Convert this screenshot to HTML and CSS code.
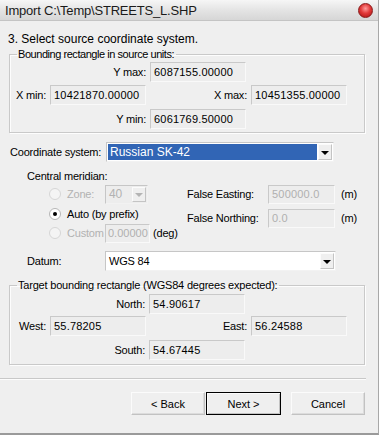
FILE: index.html
```html
<!DOCTYPE html>
<html>
<head>
<meta charset="utf-8">
<link rel="stylesheet" href="styles.css">
</head>
<body>
<div class="window">
  <div class="titlebar">
    <span class="title">Import C:\Temp\STREETS_L.SHP</span>
    <span class="close"></span>
  </div>
  <div class="content">
    <div class="step">3. Select source coordinate system.</div>

    <fieldset class="group g1">
      <legend>Bounding rectangle in source units:</legend>
      <div class="row r1">
        <span class="lbl wide">Y max:</span><span class="field">6087155.00000</span>
      </div>
      <div class="row r2">
        <span class="lbl narrow">X min:</span><span class="field">10421870.00000</span>
        <span class="lbl mid">X max:</span><span class="field">10451355.00000</span>
      </div>
      <div class="row r3">
        <span class="lbl wide">Y min:</span><span class="field">6061769.50000</span>
      </div>
    </fieldset>

    <div class="csrow">
      <span class="cslabel">Coordinate system:</span>
      <div class="combo cscombo">
        <span class="sel">Russian SK-42</span>
        <span class="arrowbtn"><span class="tri"></span></span>
      </div>
    </div>

    <div class="cm">Central meridian:</div>

    <div class="meridian">
      <div class="mleft">
        <div class="lrow l1">
          <span class="radio dis"></span><span class="rlabel dis">Zone:</span>
          <div class="combo zonecombo">
            <span class="ztext">40</span>
            <span class="arrowbtn dis"><span class="tri"></span></span>
          </div>
        </div>
        <div class="lrow l2">
          <span class="radio on"></span><span class="rlabel">Auto (by prefix)</span>
        </div>
        <div class="lrow l3">
          <span class="radio dis"></span><span class="rlabel dis">Custom</span>
          <span class="field dfield custom">0.00000</span><span class="unit">(deg)</span>
        </div>
      </div>
      <div class="mright">
        <div class="rrow">
          <span class="flabel">False Easting:</span>
          <span class="field dfield fe">500000.0</span><span class="unit m">(m)</span>
        </div>
        <div class="rrow r2nd">
          <span class="flabel">False Northing:</span>
          <span class="field dfield fe">0.0</span><span class="unit m">(m)</span>
        </div>
      </div>
    </div>

    <div class="datumrow">
      <span class="dlabel">Datum:</span>
      <div class="combo datumcombo">
        <span class="dtext">WGS 84</span>
        <span class="arrowbtn"><span class="tri"></span></span>
      </div>
    </div>

    <fieldset class="group g2">
      <legend>Target bounding rectangle (WGS84 degrees expected):</legend>
      <div class="row r1">
        <span class="lbl wide">North:</span><span class="field">54.90617</span>
      </div>
      <div class="row r2b">
        <span class="lbl narrow">West:</span><span class="field">55.78205</span>
        <span class="lbl mid">East:</span><span class="field">56.24588</span>
      </div>
      <div class="row r3b">
        <span class="lbl wide">South:</span><span class="field">54.67445</span>
      </div>
    </fieldset>

    <div class="separator"></div>

    <div class="buttons">
      <button class="btn">&lt; Back</button>
      <button class="btn default">Next &gt;</button>
      <button class="btn cancel">Cancel</button>
    </div>
  </div>
</div>
</body>
</html>
```

FILE: styles.css
```css
html, body {
  margin: 0;
  padding: 0;
  background: #efefef;
}
.window {
  width: 378px;
  height: 433px;
  border-right: 1px solid #a8a8a8;
  border-bottom: 2px solid #9a9a9a;
  background: #efefef;
  font-family: "Liberation Sans", Arial, sans-serif;
  font-size: 11px;
  letter-spacing: -0.2px;
  color: #000;
  overflow: hidden;
  white-space: nowrap;
}
.titlebar {
  height: 21px;
  display: flex;
  align-items: center;
  justify-content: space-between;
  padding: 0 5px 0 5px;
  background: linear-gradient(#f6f6f6, #e6e6e6 45%, #d6d6d6);
  border-bottom: 1px solid #c4c4c4;
  box-sizing: border-box;
}
.title {
  font-size: 13px;
  letter-spacing: -0.2px;
  color: #1a1a1a;
}
.close {
  width: 13px;
  height: 13px;
  border-radius: 50%;
  background: radial-gradient(circle at 50% 35%, #ff9a9a 0%, #e23a3a 45%, #a80f0f 100%);
  border: 1px solid #8a1a1a;
}
.step {
  margin: 12px 0 0 8px;
  line-height: 13px;
  font-size: 12px;
  letter-spacing: 0;
}
.group {
  margin: 2px 0 0 9px;
  width: 356px;
  box-sizing: border-box;
  border: 1px solid #c9c9c9;
  box-shadow: 1px 1px 0 #fdfdfd, inset 1px 1px 0 #fdfdfd;
  padding: 1px 0 3px 0;
  min-width: 0;
}
.group legend {
  margin-left: 7px;
  padding: 0 2px 0 1px;
  line-height: 13px;
}
.g1 legend {
  letter-spacing: -0.45px;
}
.row {
  display: flex;
  align-items: center;
  height: 20px;
}
.g1 .r2 { margin-top: 3px; }
.g1 .r3 { margin-top: 4px; }
.lbl {
  text-align: right;
  margin-right: 4px;
  box-sizing: border-box;
}
.lbl.wide { width: 136px; }
.lbl.narrow { width: 36px; }
.lbl.mid { width: 101px; }
.field {
  display: flex;
  align-items: center;
  width: 96px;
  height: 20px;
  box-sizing: border-box;
  padding-left: 3px;
  background: #ededed;
  border: 1px solid;
  border-color: #c9c9c9 #f9f9f9 #f9f9f9 #c9c9c9;
  overflow: hidden;
  letter-spacing: 0.2px;
}
.csrow {
  display: flex;
  align-items: center;
  margin-top: 9px;
  height: 20px;
}
.cslabel {
  margin-left: 10px;
  width: 96px;
}
.combo {
  display: flex;
  align-items: center;
  background: #fff;
  border: 1px solid;
  border-color: #c6c6c6 #f2f2f2 #f2f2f2 #c6c6c6;
  box-sizing: border-box;
  height: 20px;
  padding: 1px;
}
.cscombo {
  width: 228px;
}
.sel {
  flex: 1;
  height: 16px;
  background: #3165b5;
  color: #fff;
  font-size: 12px;
  letter-spacing: 0;
  line-height: 16px;
  padding-left: 2px;
  margin-right: 1px;
}
.arrowbtn {
  width: 14px;
  height: 16px;
  box-sizing: border-box;
  background: #efefef;
  border: 1px solid;
  border-color: #fbfbfb #c4c4c4 #c4c4c4 #fbfbfb;
  display: flex;
  align-items: center;
  justify-content: center;
  margin-left: auto;
}
.tri {
  width: 0;
  height: 0;
  border-left: 4px solid transparent;
  border-right: 4px solid transparent;
  border-top: 4px solid #000;
  margin-top: 1px;
}
.arrowbtn.dis .tri {
  border-top-color: #b4b4b4;
}
.cm {
  margin: 8px 0 0 27px;
  line-height: 13px;
}
.meridian {
  display: flex;
  margin-top: 1px;
}
.mleft {
  margin-left: 49px;
  width: 138px;
}
.lrow {
  display: flex;
  align-items: center;
  height: 20px;
}
.lrow.l2 {
  height: 19px;
}
.rrow {
  display: flex;
  align-items: center;
  height: 20px;
}
.rrow.r2nd {
  margin-top: 4px;
}
.radio {
  width: 12px;
  height: 12px;
  flex: none;
  box-sizing: border-box;
  border-radius: 50%;
  border: 1px solid #c8c8c8;
  background: #f4f4f4;
  display: flex;
  align-items: center;
  justify-content: center;
}
.radio.on {
  background: #fff;
  border-color: #b6b6b6;
}
.radio.on::after {
  content: "";
  width: 4px;
  height: 4px;
  border-radius: 50%;
  background: #000;
}
.radio.dis {
  border-color: #d6d6d6;
}
.rlabel {
  margin-left: 6px;
}
.rlabel.dis {
  color: #b2b2b2;
  width: 38px;
}
.zonecombo {
  width: 43px;
  height: 19px;
  background: #ededed;
}
.ztext {
  color: #b2b2b2;
  font-size: 12px;
  padding-left: 2px;
}
.zonecombo .arrowbtn {
  height: 15px;
}
.dfield {
  color: #b0b0b0;
  font-size: 11px;
  letter-spacing: 0.2px;
  height: 19px;
}
.custom {
  width: 45px;
  padding-left: 2px;
  letter-spacing: 0;
}
.unit {
  margin-left: 3px;
}
.unit.m {
  margin-left: 6px;
}
.flabel {
  width: 81px;
}
.fe {
  width: 67px;
}
.datumrow {
  display: flex;
  align-items: center;
  margin-top: 8px;
  height: 20px;
}
.dlabel {
  margin-left: 27px;
  width: 78px;
}
.datumcombo {
  width: 231px;
}
.dtext {
  padding-left: 2px;
}
.g2 {
  margin-top: 8px;
  padding-top: 2px;
  padding-bottom: 4px;
}
.g2 .r2b { margin-top: 2px; }
.g2 .r3b { margin-top: 4px; }
.g2 .lbl.wide { width: 135px; }
.separator {
  margin-top: 13px;
  width: 366px;
  height: 1px;
  background: #c8c8c8;
  border-bottom: 1px solid #fcfcfc;
}
.buttons {
  display: flex;
  margin-top: 12px;
  padding-left: 131px;
}
.btn {
  width: 74px;
  height: 23px;
  font-family: "Liberation Sans", Arial, sans-serif;
  font-size: 11px;
  color: #000;
  background: #efefef;
  border: 1px solid;
  border-color: #fbfbfb #c2c2c2 #c2c2c2 #fbfbfb;
  box-shadow: inset -1px -1px 0 #dcdcdc;
  padding: 0;
  margin: 0;
}
.btn.default {
  margin-left: 1px;
  border: 1px solid #000;
  box-shadow: inset 1px 1px 0 #fbfbfb, inset -1px -1px 0 #c2c2c2;
  width: 75px;
}
.btn.cancel {
  margin-left: 10px;
}
```
